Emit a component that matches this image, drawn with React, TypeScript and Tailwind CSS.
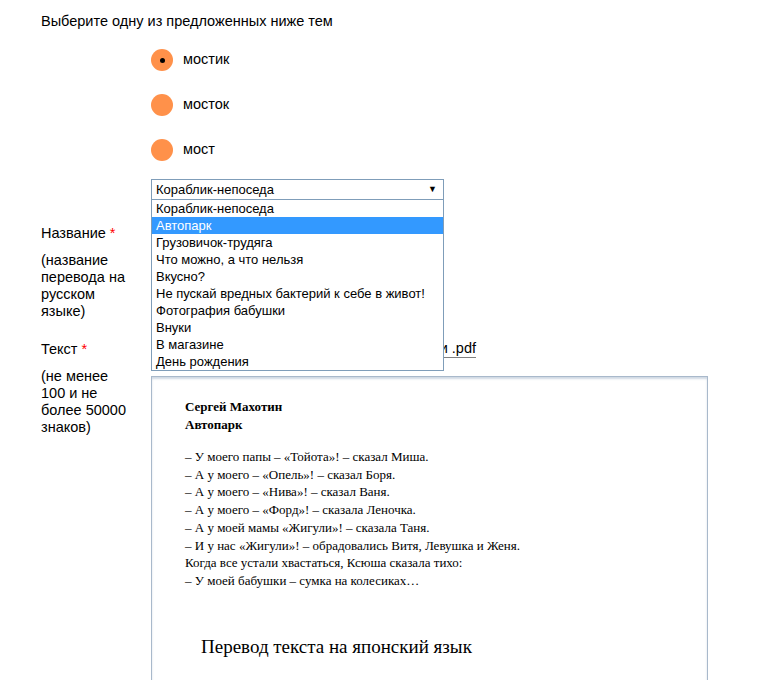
import React, { useState } from 'react';

const topics = ['мостик', 'мосток', 'мост'];

const options = [
  'Кораблик-непоседа',
  'Автопарк',
  'Грузовичок-трудяга',
  'Что можно, а что нельзя',
  'Вкусно?',
  'Не пускай вредных бактерий к себе в живот!',
  'Фотография бабушки',
  'Внуки',
  'В магазине',
  'День рождения',
];

const storyLines = [
  '– У моего папы – «Тойота»! – сказал Миша.',
  '– А у моего – «Опель»! – сказал Боря.',
  '– А у моего – «Нива»! – сказал Ваня.',
  '– А у моего – «Форд»! – сказала Леночка.',
  '– А у моей мамы «Жигули»! – сказала Таня.',
  '– И у нас «Жигули»! – обрадовались Витя, Левушка и Женя.',
  'Когда все устали хвастаться, Ксюша сказала тихо:',
  '– У моей бабушки – сумка на колесиках…',
];

const App = () => {
  const [selected, setSelected] = useState(0);
  const [hovered] = useState(1);

  return (
    <div className="w-[763px] h-[680px] overflow-hidden bg-white text-black font-['Liberation_Sans',Arial,sans-serif]">
      <div className="pl-[41px] pt-[13px]">
        <div className="text-[14.5px] leading-[17px]">Выберите одну из предложенных ниже тем</div>

        {/* Радио-кнопки */}
        <div className="pl-[110px] pt-[19px] flex flex-col gap-[23px]">
          {topics.map((t, i) => (
            <label key={t} className="flex items-center gap-[10px] h-[22px] cursor-pointer" onClick={() => setSelected(i)}>
              <span className="w-[22px] h-[22px] rounded-full bg-[#ff914a] flex items-center justify-center">
                {selected === i && <span className="w-[5px] h-[5px] rounded-full bg-black"></span>}
              </span>
              <span className="text-[14.5px]">{t}</span>
            </label>
          ))}
        </div>

        {/* Выпадающий список */}
        <div className="pl-[110px] pt-[18px]">
          <div className="relative w-[293px] z-10">
            <div className="h-[21px] border border-[#7f9db9] bg-white flex items-center justify-between pl-[4px] pr-[6px] text-[13px]">
              <span>{options[0]}</span>
              <span className="text-[9px]">▼</span>
            </div>
            <div className="absolute top-full left-0 w-full border border-[#7f9db9] border-t-0 bg-white text-[13px] leading-[17px]">
              {options.map((o, i) => (
                <div key={o} className={`px-[4px] h-[17px] ${i === hovered ? 'bg-[#3399ff] text-white' : ''}`}>{o}</div>
              ))}
            </div>
          </div>
        </div>

        {/* Поля формы */}
        <div className="grid grid-cols-[110px_1fr] pt-[25px] text-[14.5px] leading-[17px]">
          <div className="pr-[20px]">
            <div>Название <span className="text-[#ff0000]">*</span></div>
            <div className="mt-[10px]">(название перевода на русском языке)</div>
          </div>
          <div></div>

          <div className="pr-[20px] pt-[21px]">
            <div>Текст <span className="text-[#ff0000]">*</span></div>
            <div className="mt-[10px]">(не менее 100 и не более 50000 знаков)</div>
          </div>
          <div className="pt-[19px]">
            <div className="flex justify-end w-[325px]">
              <span className="border-b border-[#808080] leading-[18px]">Загрузить файл .doc или .pdf</span>
            </div>
            <div className="mt-[18px] w-[557px] h-[320px] border border-[#a9b9cb] shadow-[inset_0_2px_2px_rgba(150,170,195,0.45)] bg-white font-['Liberation_Serif','Times_New_Roman',serif] pl-[33px] pt-[21px]">
              <div className="font-bold text-[13px] leading-[18px]">Сергей Махотин</div>
              <div className="font-bold text-[13px] leading-[18px]">Автопарк</div>
              <div className="mt-[14px] text-[13px] leading-[17.7px]">
                {storyLines.map((l) => (
                  <div key={l}>{l}</div>
                ))}
              </div>
              <div className="mt-[46px] pl-[16px] text-[19px] leading-[22px]">Перевод текста на японский язык</div>
            </div>
          </div>
        </div>
      </div>
    </div>
  );
};

export default App;
